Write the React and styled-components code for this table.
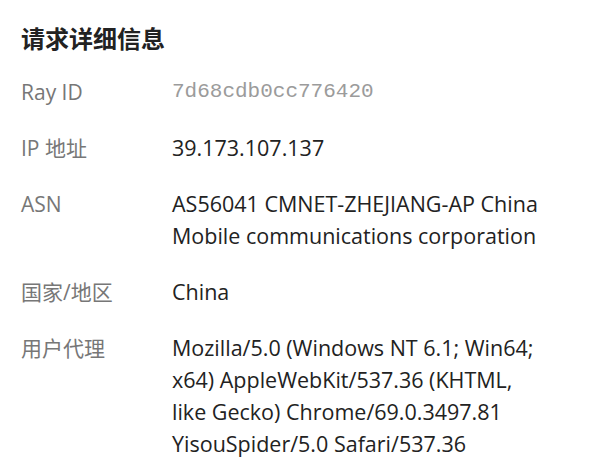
import React from "react";
import styled, { createGlobalStyle } from "styled-components";

const Global = createGlobalStyle`
  html, body { margin: 0; padding: 0; background: #fff; }
  body { font-family: "Open Sans", "Noto Sans CJK SC", sans-serif; }
`;

const Page = styled.div`
  padding: 22px 21px 20px 21px;
`;

const Title = styled.h2`
  margin: 0 0 22px 0;
  font-size: 24px;
  line-height: 32px;
  font-weight: 700;
  color: #222;
  font-family: "Noto Sans CJK SC", sans-serif;
`;

const List = styled.dl`
  margin: 0;
  display: grid;
  grid-template-columns: 151px 372px;
  row-gap: 24px;
`;

const Label = styled.dt`
  margin: 0;
  font-size: 21px;
  line-height: 32px;
  color: #777;
  font-family: "Open Sans", "Noto Sans CJK SC", sans-serif;
`;

const Value = styled.dd`
  margin: 0;
  font-size: 21.5px;
  line-height: 32px;
  color: #222;
  font-family: "Open Sans", "Noto Sans CJK SC", sans-serif;
`;

const MonoValue = styled(Value)`
  font-family: "Liberation Mono", "Courier New", monospace;
  font-size: 21px;
  color: #9b9b9b;
`;

const rows = [
  ["Ray ID", "7d68cdb0cc776420", true],
  ["IP 地址", "39.173.107.137"],
  ["ASN", "AS56041 CMNET-ZHEJIANG-AP China Mobile communications corporation"],
  ["国家/地区", "China"],
  ["用户代理", "Mozilla/5.0 (Windows NT 6.1; Win64; x64) AppleWebKit/537.36 (KHTML, like Gecko) Chrome/69.0.3497.81 YisouSpider/5.0 Safari/537.36"],
];

export default function App() {
  return (
    <Page>
      <Global />
      <Title>请求详细信息</Title>
      <List>
        {rows.map(([k, v, mono]) => (
          <React.Fragment key={k}>
            <Label>{k}</Label>
            {mono ? <MonoValue>{v}</MonoValue> : <Value>{v}</Value>}
          </React.Fragment>
        ))}
      </List>
    </Page>
  );
}
